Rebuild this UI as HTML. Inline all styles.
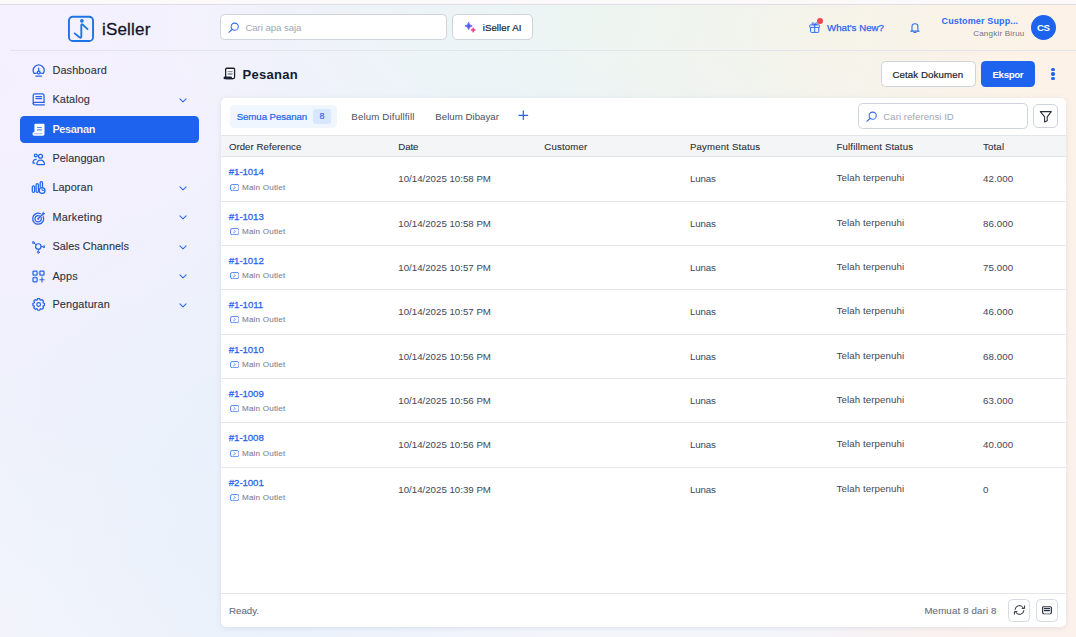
<!DOCTYPE html>
<html lang="id">
<head>
<meta charset="utf-8">
<title>Pesanan - iSeller</title>
<style>
*{box-sizing:border-box;margin:0;padding:0}
html,body{width:1076px;height:637px;overflow:hidden}
body{font-family:"Liberation Sans",sans-serif;color:#1f2937;position:relative;
 background:
  radial-gradient(ellipse 330px 300px at 1076px 40px, rgba(253,242,230,1) 0%, rgba(253,242,230,0) 100%),
  radial-gradient(ellipse 330px 230px at 830px 30px, rgba(243,244,233,1) 0%, rgba(243,244,233,0) 100%),
  radial-gradient(ellipse 440px 260px at 580px 10px, rgba(234,245,244,1) 0%, rgba(234,245,244,0) 100%),
  linear-gradient(270deg, rgba(252,241,235,1) 0px, rgba(252,241,235,0.9) 12px, rgba(252,241,235,0) 260px),
  radial-gradient(ellipse 300px 640px at 1076px 637px, rgba(252,239,237,1) 0%, rgba(252,239,237,0) 100%),
  radial-gradient(ellipse 300px 380px at 260px 540px, rgba(232,240,251,1) 0%, rgba(232,240,251,0) 100%),
  radial-gradient(ellipse 420px 420px at 0px 80px, rgba(245,240,254,1) 0%, rgba(245,240,254,0) 100%),
  linear-gradient(180deg,#f2f2fd 0%,#edf1fb 55%,#f4f5fb 100%);
}
.abs{position:absolute}
.t{position:absolute;white-space:nowrap;line-height:1}
#topstrip{left:0;top:0;width:1076px;height:4px;background:#fbf9f9}
#topline{left:0;top:4px;width:1076px;height:1px;background:#dfdde3}
#hline{left:10px;top:50px;width:1066px;height:1px;background:#e3e4ea}
.nav{color:#2b3240;-webkit-text-stroke:0.1px #2b3240}
.ic{position:absolute;left:32.4px;width:13px;height:13px;fill:none;stroke:#2563eb;stroke-width:1.25;stroke-linecap:round;stroke-linejoin:round}
.chev{position:absolute;left:179.3px;width:8px;height:5px;fill:none;stroke:#2f6bee;stroke-width:1.05;stroke-linecap:round;stroke-linejoin:round}
#active{left:20px;top:116px;width:179px;height:26.8px;border-radius:4.5px;background:#1d63ed}
.box{position:absolute;background:#fff;border:1px solid #cfd3dc;border-radius:4.5px}
.ph{color:#a2a8b4}
#card{left:221px;top:98px;width:845px;height:529px;background:#fff;border-radius:5px;box-shadow:0 1px 5px rgba(80,100,160,.13)}
#thead{left:221px;top:135px;width:845px;height:22px;background:#f4f5f7;border-top:1px solid #e3e5eb;border-bottom:1px solid #e3e5eb}
.th{color:#2a303b;-webkit-text-stroke:0.1px #2a303b}
.rl{position:absolute;left:221px;width:845px;height:1px;background:#e5e7ed}
.ref{color:#2865ee;-webkit-text-stroke:0.26px #2865ee}
.out{color:#7d8391;-webkit-text-stroke:0.1px #7d8391}
.c{color:#414755}
.tab{color:#4a505c}
.ft{color:#697080;-webkit-text-stroke:0.12px #697080}
</style>
</head>
<body>
<div id="topstrip" class="abs"></div>
<div id="topline" class="abs"></div>
<div id="hline" class="abs"></div>

<!-- logo -->
<svg class="abs" style="left:67px;top:15px" width="28" height="28" viewBox="0 0 28 28" fill="none">
 <rect x="1.95" y="1.75" width="24.1" height="24.3" rx="3.9" stroke="#1b74e8" stroke-width="1.9"/>
 <circle cx="14.9" cy="5.8" r="1.85" fill="#1b74e8"/>
 <path d="M7.7 18.4 L12.4 22.2 Q14.3 23.6 14.3 21.4 V10.6 Q14.3 8.4 16 9.9 L20.5 14.1" stroke="#1b74e8" stroke-width="1.85" stroke-linecap="round" stroke-linejoin="round"/>
</svg>
<span class="t" style="left:102px;top:20.9px;font-size:17px;color:#14142b;-webkit-text-stroke:0.3px #14142b;letter-spacing:0.18px">iSeller</span>

<!-- top search -->
<div class="box" style="left:220px;top:14.3px;width:226.5px;height:25.4px"></div>
<svg class="abs" style="left:228px;top:22px" width="12" height="11" viewBox="0 0 12 11" fill="none" stroke="#2f6bee" stroke-width="1.05" stroke-linecap="round"><circle cx="6.7" cy="4.7" r="3.6"/><path d="M4 7.5 L0.9 10.3"/></svg>
<span class="t ph" style="left:245.4px;top:22.8px;font-size:9.7px;letter-spacing:-0.08px">Cari apa saja</span>
<div class="box" style="left:452px;top:14.3px;width:81px;height:25.4px;border-radius:5px"></div>
<svg class="abs" style="left:464px;top:21px" width="13" height="13" viewBox="0 0 13 13"><defs><linearGradient id="g1" x1="0" y1="0" x2="1" y2="1"><stop offset="0" stop-color="#3f7bff"/><stop offset="1" stop-color="#7a3ff0"/></linearGradient></defs><path d="M4.6 1.2 Q5 4.5 8.2 4.9 Q5 5.3 4.6 8.6 Q4.2 5.3 1 4.9 Q4.2 4.5 4.6 1.2Z" fill="url(#g1)" stroke="url(#g1)" stroke-width="0.8" stroke-linejoin="round"/><path d="M9.2 6.6 Q9.5 8.7 11.6 9 Q9.5 9.3 9.2 11.4 Q8.9 9.3 6.8 9 Q8.9 8.7 9.2 6.6Z" fill="#e8468a" stroke="#e8468a" stroke-width="0.7" stroke-linejoin="round"/></svg>
<span class="t" style="left:482.7px;top:22.8px;font-size:9.7px;color:#20242f;-webkit-text-stroke:0.2px #20242f;letter-spacing:0.05px">iSeller AI</span>

<!-- top right -->
<svg class="abs" style="left:808.6px;top:22.4px" width="11.4" height="11" viewBox="0 0 11.4 11" fill="none" stroke="#2f6bee" stroke-width="1" stroke-linejoin="round"><rect x="0.7" y="2.9" width="10" height="2.5" rx="0.6"/><path d="M1.6 5.4 V9.6 a0.8 0.8 0 0 0 .8 .8 H9 a0.8 .8 0 0 0 .8 -.8 V5.4"/><path d="M5.7 2.9 V10.4"/><path d="M5.7 2.9 C3.6 2.9 2.7 2 3.2 1.1 C3.8 .2 5.3 .9 5.7 2.9 C6.1 .9 7.6 .2 8.2 1.1 C8.7 2 7.8 2.9 5.7 2.9Z"/></svg>
<div class="abs" style="left:816.7px;top:18.3px;width:6px;height:6px;border-radius:50%;background:#ee4552"></div>
<span class="t" style="left:827px;top:22.8px;font-size:9.7px;color:#2a63ea;-webkit-text-stroke:0.25px #2a63ea;letter-spacing:0.02px">What&#39;s New?</span>
<svg class="abs" style="left:909.6px;top:22px" width="10" height="11.4" viewBox="0 0 10 11.4" fill="none" stroke="#2f6bee" stroke-width="1.1" stroke-linejoin="round" stroke-linecap="round"><path d="M2 9 V4.3 a2.6 2.6 0 0 1 2.6 -2.6 H5.3 a2.6 2.6 0 0 1 2.6 2.6 V9"/><path d="M0.9 9.2 H9" stroke-width="1.2"/><path d="M3.9 10.5 H6" stroke-width="1.1"/></svg>
<span class="t" style="left:941.5px;top:17.2px;font-size:9px;font-weight:bold;color:#2d6bf0;letter-spacing:0.14px">Customer Supp...</span>
<span class="t" style="left:973.2px;top:30.1px;font-size:8px;color:#6f7582;letter-spacing:0.22px">Cangkir Biruu</span>
<div class="abs" style="left:1030.9px;top:15.1px;width:25px;height:25px;border-radius:50%;background:#1d63ed"></div>
<span class="t" style="left:1037px;top:23.2px;font-size:9.7px;font-weight:bold;color:#fff;letter-spacing:-0.38px">CS</span>

<!-- sidebar -->
<div id="active" class="abs"></div>
<!--ICONS-->
<svg class="ic" style="top:64.45px" viewBox="0 0 13 13"><path d="M5.3 9 Q3.5 9.6 2.15 9.3 A5.4 5.4 0 1 1 11.25 9.3 Q9.9 9.6 8.1 9"/><circle cx="6.7" cy="8.4" r="1.4"/><path d="M6.7 6.9 V4"/><path d="M3.9 12 H9.5"/></svg>
<svg class="ic" style="top:93.4px" viewBox="0 0 13 13"><path d="M12 9.3 V2.3 a1.5 1.5 0 0 0 -1.5 -1.5 H2.7 a1.5 1.5 0 0 0 -1.5 1.5 V10.4 a1.5 1.5 0 0 0 1.5 1.5 H12.3"/><path d="M1.2 10.7 a1.5 1.5 0 0 1 1.5 -1.4 H12.3" stroke-width="1.3"/><path d="M3.9 3.6 H9.6 M3.9 5.6 H9.6" stroke-width="1.15"/></svg>
<svg class="ic" style="top:123.25px;stroke:none" viewBox="0 0 13 13"><path d="M2.4 1.7 a0.9 0.9 0 0 1 .9 -.9 H11.6 a0.9 0.9 0 0 1 .9 .9 V9.8 H2.4Z" fill="#fff"/><rect x="0.5" y="8.9" width="12" height="3.8" rx="1.6" fill="#fff"/><path d="M5 4.5 H9.9 M5 6.9 H9.9" stroke="#5b8df5" stroke-width="1.1" stroke-linecap="butt"/><path d="M2.2 10.8 H10" stroke="#7fa6f7" stroke-width="0.8"/></svg>
<svg class="ic" style="top:152.8px" viewBox="0 0 13 13"><circle cx="3.8" cy="2.5" r="1.45"/><circle cx="8.5" cy="3.2" r="1.95"/><path d="M5.3 11.6 H12 a.5 .5 0 0 0 .5 -.6 C12.2 8.5 10.6 7 8.6 7 C6.6 7 5.1 8.5 4.8 11 a.5 .5 0 0 0 .5 .6Z"/><path d="M4.2 6.3 C2.4 6.1 1.1 7.6 0.9 9.5 c0 .4 .2 .7 .6 .7 H2.7"/></svg>
<svg class="ic" style="top:181.35px;overflow:visible" viewBox="0 0 13 13"><rect x="0.3" y="4.8" width="2.3" height="6.6" rx="1.15"/><rect x="4.1" y="2.6" width="2.3" height="8.8" rx="1.15"/><path d="M8.2 6 V1.75 a1.15 1.15 0 0 1 2.3 0 V5.6"/><circle cx="10.1" cy="9.4" r="2.9" fill="#f1f1fd"/><path d="M10.1 7.6 V9.4 H11.9" stroke-width="0.9"/></svg>
<svg class="ic" style="top:211.65px;overflow:visible" viewBox="0 0 13 13"><path d="M8.4 1.7 A5.5 5.5 0 1 0 11.3 4.7"/><path d="M7.7 3.95 A3.2 3.2 0 1 0 9.1 5.5"/><circle cx="6.2" cy="6.75" r="0.9" fill="#2f6bee" stroke="none"/><path d="M6.2 6.75 L10 2.9"/><path d="M10 2.9 L10.2 1.3 L11.5 0.2 L11.7 1.3 L12.9 1.6 L11.6 2.8Z" fill="#2f6bee" stroke-width="0.6"/></svg>
<svg class="ic" style="top:240.6px" viewBox="0 0 13 13"><circle cx="6.3" cy="5.5" r="2.75" stroke-width="1.2"/><circle cx="1.2" cy="1.5" r="1" stroke-width="0.95"/><circle cx="12" cy="5.7" r="1" stroke-width="0.95"/><circle cx="6.3" cy="11.3" r="1" stroke-width="0.95"/><path d="M2 2.1 L4.1 3.8 M9.1 5.6 H11 M6.3 8.3 V10.3" stroke-width="0.95"/></svg>
<svg class="ic" style="top:269.6px" viewBox="0 0 13 13"><rect x="1" y="1" width="4.1" height="4.1" rx="0.7"/><rect x="7.9" y="1" width="4.1" height="4.1" rx="0.7"/><rect x="1" y="7.7" width="4.1" height="4.1" rx="0.7"/><path d="M10 7.8 V11.9 M7.9 9.8 H12.1" stroke-width="1.1"/><path d="M5.1 3 H7.9 M3 5.1 V7.7 M10 5.1 V7.6" stroke="#7ea4f5" stroke-width="0.9"/></svg>
<svg class="ic" style="top:298.4px" viewBox="0 0 13 13"><path d="M5.25 1.91 L5.48 0.67 L7.82 0.67 L8.05 1.91 L8.87 2.25 L9.91 1.53 L11.57 3.19 L10.85 4.23 L11.19 5.05 L12.43 5.28 L12.43 7.62 L11.19 7.85 L10.85 8.67 L11.57 9.71 L9.91 11.37 L8.87 10.65 L8.05 10.99 L7.82 12.23 L5.48 12.23 L5.25 10.99 L4.43 10.65 L3.39 11.37 L1.73 9.71 L2.45 8.67 L2.11 7.85 L0.87 7.62 L0.87 5.28 L2.11 5.05 L2.45 4.23 L1.73 3.19 L3.39 1.53 L4.43 2.25Z" stroke-width="1.2"/><circle cx="6.65" cy="6.45" r="1.9" stroke-width="1.15"/></svg>
<!--/ICONS-->
<span class="t nav" style="left:52.4px;top:64.5px;font-size:10.9px;letter-spacing:0.14px">Dashboard</span>
<span class="t nav" style="left:52.4px;top:93.8px;font-size:10.9px;letter-spacing:0.09px">Katalog</span>
<span class="t nav" style="left:52.4px;top:123.7px;font-size:10.9px;color:#fff;font-weight:bold;letter-spacing:-0.31px">Pesanan</span>
<span class="t nav" style="left:52.4px;top:152.9px;font-size:10.9px;letter-spacing:0.03px">Pelanggan</span>
<span class="t nav" style="left:52.4px;top:181.5px;font-size:10.9px;letter-spacing:0.06px">Laporan</span>
<span class="t nav" style="left:52.4px;top:211.7px;font-size:10.9px;letter-spacing:0.22px">Marketing</span>
<span class="t nav" style="left:52.4px;top:241px;font-size:10.9px;letter-spacing:0.02px">Sales Channels</span>
<span class="t nav" style="left:52.4px;top:270.6px;font-size:10.9px;letter-spacing:0.14px">Apps</span>
<span class="t nav" style="left:52.4px;top:298.5px;font-size:10.9px;letter-spacing:0.12px">Pengaturan</span>
<svg class="chev" style="top:97.5px" viewBox="0 0 8 5"><path d="M0.9 0.8 L4 3.9 L7.1 0.8"/></svg>
<svg class="chev" style="top:185.7px" viewBox="0 0 8 5"><path d="M0.9 0.8 L4 3.9 L7.1 0.8"/></svg>
<svg class="chev" style="top:214.6px" viewBox="0 0 8 5"><path d="M0.9 0.8 L4 3.9 L7.1 0.8"/></svg>
<svg class="chev" style="top:244.6px" viewBox="0 0 8 5"><path d="M0.9 0.8 L4 3.9 L7.1 0.8"/></svg>
<svg class="chev" style="top:274px" viewBox="0 0 8 5"><path d="M0.9 0.8 L4 3.9 L7.1 0.8"/></svg>
<svg class="chev" style="top:303.1px" viewBox="0 0 8 5"><path d="M0.9 0.8 L4 3.9 L7.1 0.8"/></svg>

<!-- page title -->
<svg class="abs" style="left:222.6px;top:67.4px" width="13" height="13" viewBox="0 0 13 13"><path d="M2.65 10 V2.3 a1.05 1.05 0 0 1 1.05 -1.05 H10.5 a1.05 1.05 0 0 1 1.05 1.05 V10.2 a1.45 1.45 0 0 1 -1.45 1.45 H3" fill="#fff" stroke="#1a2232" stroke-width="1.3" stroke-linejoin="round"/><path d="M1.9 9.6 H8.3 L9.4 10.9 Q10.2 11.6 10.1 12.3 H1.9 a1.35 1.35 0 0 1 0 -2.7Z" fill="#1a2232"/><path d="M4.7 4.6 H9.6" stroke="#8d93a0" stroke-width="1.25"/><path d="M4.7 7 H9.6" stroke="#3a4150" stroke-width="1"/></svg>
<span class="t" style="left:242.6px;top:67.7px;font-size:13px;font-weight:bold;color:#131a33;letter-spacing:0.29px">Pesanan</span>
<div class="box" style="left:881px;top:61px;width:94.8px;height:26px;border-radius:4.5px"></div>
<span class="t" style="left:892.5px;top:69.9px;font-size:9.7px;color:#20242f;-webkit-text-stroke:0.2px #20242f;letter-spacing:0.09px">Cetak Dokumen</span>
<div class="abs" style="left:981px;top:61px;width:54px;height:26px;border-radius:4.5px;background:#1d63ed"></div>
<span class="t" style="left:992.5px;top:69.9px;font-size:9.7px;color:#fff;font-weight:bold;letter-spacing:-0.34px">Ekspor</span>
<div class="abs" style="left:1051.3px;top:67.7px;width:3.4px;height:3.4px;border-radius:50%;background:#2563eb"></div>
<div class="abs" style="left:1051.3px;top:72.2px;width:3.4px;height:3.4px;border-radius:50%;background:#2563eb"></div>
<div class="abs" style="left:1051.3px;top:76.8px;width:3.4px;height:3.4px;border-radius:50%;background:#2563eb"></div>

<!-- card -->
<div id="card" class="abs"></div>
<div class="abs" style="left:230px;top:104.8px;width:107px;height:23px;border-radius:4.5px;background:#eff6ff"></div>
<span class="t" style="left:236.7px;top:111.8px;font-size:9.7px;color:#2563eb;-webkit-text-stroke:0.2px #2563eb;letter-spacing:-0.09px">Semua Pesanan</span>
<div class="abs" style="left:313.1px;top:109.1px;width:17.7px;height:14.8px;border-radius:3px;background:#d7e7fe"></div>
<span class="t" style="left:319.6px;top:111.7px;font-size:8.8px;color:#2563eb;-webkit-text-stroke:0.15px #2563eb">8</span>
<span class="t tab" style="left:351.3px;top:111.8px;font-size:9.7px;letter-spacing:0.15px">Belum Difullfill</span>
<span class="t tab" style="left:435.3px;top:111.8px;font-size:9.7px;letter-spacing:0.01px">Belum Dibayar</span>
<svg class="abs" style="left:518px;top:109.5px" width="10.6" height="10.6" viewBox="0 0 10.6 10.6" stroke="#2563eb" stroke-width="1.2" stroke-linecap="round"><path d="M5.3 0.9 V9.7 M0.9 5.3 H9.7"/></svg>

<div class="box" style="left:858.2px;top:103.4px;width:169.6px;height:25.4px"></div>
<svg class="abs" style="left:866.2px;top:111.2px" width="12" height="11" viewBox="0 0 12 11" fill="none" stroke="#2f6bee" stroke-width="1.05" stroke-linecap="round"><circle cx="6.7" cy="4.7" r="3.6"/><path d="M4 7.5 L0.9 10.3"/></svg>
<span class="t ph" style="left:883.3px;top:111.8px;font-size:9.7px;letter-spacing:0.00px">Cari referensi ID</span>
<div class="box" style="left:1033.2px;top:104.3px;width:24.4px;height:24.2px;border-radius:5px"></div>
<svg class="abs" style="left:1038.6px;top:109.6px" width="14" height="14" viewBox="0 0 14 14" fill="none" stroke="#252b38" stroke-width="1.05" stroke-linejoin="round"><path d="M1.3 1.6 H12.3 L8.2 6.9 V10.8 L5.6 12 V6.9Z"/></svg>

<div id="thead" class="abs"></div>
<span class="t th" style="left:228.9px;top:141.8px;font-size:9.6px;letter-spacing:0.07px">Order Reference</span>
<span class="t th" style="left:398.3px;top:141.8px;font-size:9.6px;letter-spacing:-0.04px">Date</span>
<span class="t th" style="left:544.3px;top:141.8px;font-size:9.6px;letter-spacing:0.20px">Customer</span>
<span class="t th" style="left:690px;top:141.8px;font-size:9.6px;letter-spacing:0.18px">Payment Status</span>
<span class="t th" style="left:836.5px;top:141.8px;font-size:9.6px;letter-spacing:0.17px">Fulfillment Status</span>
<span class="t th" style="left:983px;top:141.8px;font-size:9.6px;letter-spacing:0.19px">Total</span>

<span class="t ref" style="left:228.8px;top:166.70px;font-size:9.7px;letter-spacing:-0.09px">#1-1014</span>
<svg class="abs" style="left:229.7px;top:183.8px" width="9.4" height="7.2" viewBox="0 0 9.4 7.2" fill="none" stroke="#4a82f3" stroke-width="0.95"><rect x="0.5" y="0.5" width="8.3" height="6.2" rx="1.7"/><path d="M8.6 1.8 V5.4" stroke="#a9c5fa" stroke-width="1.1"/><path d="M4 2.4 L5.5 3.6 L3.4 4.9" stroke="#6f9bf6" stroke-width="0.9" stroke-linecap="round" stroke-linejoin="round"/></svg>
<span class="t out" style="left:242.0px;top:183.50px;font-size:8.1px;letter-spacing:0.19px">Main Outlet</span>
<span class="t c" style="left:398.3px;top:173.70px;font-size:9.7px;letter-spacing:-0.00px">10/14/2025 10:58 PM</span>
<span class="t c" style="left:690.0px;top:173.70px;font-size:9.7px;letter-spacing:-0.14px">Lunas</span>
<span class="t c" style="left:836.5px;top:172.70px;font-size:9.7px;letter-spacing:0.10px">Telah terpenuhi</span>
<span class="t c" style="left:983.0px;top:173.70px;font-size:9.7px;letter-spacing:0.11px">42.000</span>
<div class="rl" style="top:201px"></div>
<span class="t ref" style="left:228.8px;top:211.70px;font-size:9.7px;letter-spacing:-0.09px">#1-1013</span>
<svg class="abs" style="left:229.7px;top:227.8px" width="9.4" height="7.2" viewBox="0 0 9.4 7.2" fill="none" stroke="#4a82f3" stroke-width="0.95"><rect x="0.5" y="0.5" width="8.3" height="6.2" rx="1.7"/><path d="M8.6 1.8 V5.4" stroke="#a9c5fa" stroke-width="1.1"/><path d="M4 2.4 L5.5 3.6 L3.4 4.9" stroke="#6f9bf6" stroke-width="0.9" stroke-linecap="round" stroke-linejoin="round"/></svg>
<span class="t out" style="left:242.0px;top:227.50px;font-size:8.1px;letter-spacing:0.19px">Main Outlet</span>
<span class="t c" style="left:398.3px;top:218.70px;font-size:9.7px;letter-spacing:-0.00px">10/14/2025 10:58 PM</span>
<span class="t c" style="left:690.0px;top:218.70px;font-size:9.7px;letter-spacing:-0.14px">Lunas</span>
<span class="t c" style="left:836.5px;top:217.70px;font-size:9.7px;letter-spacing:0.10px">Telah terpenuhi</span>
<span class="t c" style="left:983.0px;top:218.70px;font-size:9.7px;letter-spacing:0.11px">86.000</span>
<div class="rl" style="top:245px"></div>
<span class="t ref" style="left:228.8px;top:255.70px;font-size:9.7px;letter-spacing:-0.09px">#1-1012</span>
<svg class="abs" style="left:229.7px;top:271.8px" width="9.4" height="7.2" viewBox="0 0 9.4 7.2" fill="none" stroke="#4a82f3" stroke-width="0.95"><rect x="0.5" y="0.5" width="8.3" height="6.2" rx="1.7"/><path d="M8.6 1.8 V5.4" stroke="#a9c5fa" stroke-width="1.1"/><path d="M4 2.4 L5.5 3.6 L3.4 4.9" stroke="#6f9bf6" stroke-width="0.9" stroke-linecap="round" stroke-linejoin="round"/></svg>
<span class="t out" style="left:242.0px;top:271.50px;font-size:8.1px;letter-spacing:0.19px">Main Outlet</span>
<span class="t c" style="left:398.3px;top:262.70px;font-size:9.7px;letter-spacing:-0.00px">10/14/2025 10:57 PM</span>
<span class="t c" style="left:690.0px;top:262.70px;font-size:9.7px;letter-spacing:-0.14px">Lunas</span>
<span class="t c" style="left:836.5px;top:261.70px;font-size:9.7px;letter-spacing:0.10px">Telah terpenuhi</span>
<span class="t c" style="left:983.0px;top:262.70px;font-size:9.7px;letter-spacing:0.11px">75.000</span>
<div class="rl" style="top:289px"></div>
<span class="t ref" style="left:228.8px;top:299.70px;font-size:9.7px;letter-spacing:-0.07px">#1-1011</span>
<svg class="abs" style="left:229.7px;top:315.8px" width="9.4" height="7.2" viewBox="0 0 9.4 7.2" fill="none" stroke="#4a82f3" stroke-width="0.95"><rect x="0.5" y="0.5" width="8.3" height="6.2" rx="1.7"/><path d="M8.6 1.8 V5.4" stroke="#a9c5fa" stroke-width="1.1"/><path d="M4 2.4 L5.5 3.6 L3.4 4.9" stroke="#6f9bf6" stroke-width="0.9" stroke-linecap="round" stroke-linejoin="round"/></svg>
<span class="t out" style="left:242.0px;top:315.50px;font-size:8.1px;letter-spacing:0.19px">Main Outlet</span>
<span class="t c" style="left:398.3px;top:306.70px;font-size:9.7px;letter-spacing:-0.00px">10/14/2025 10:57 PM</span>
<span class="t c" style="left:690.0px;top:306.70px;font-size:9.7px;letter-spacing:-0.14px">Lunas</span>
<span class="t c" style="left:836.5px;top:305.70px;font-size:9.7px;letter-spacing:0.10px">Telah terpenuhi</span>
<span class="t c" style="left:983.0px;top:306.70px;font-size:9.7px;letter-spacing:0.11px">46.000</span>
<div class="rl" style="top:334px"></div>
<span class="t ref" style="left:228.8px;top:344.70px;font-size:9.7px;letter-spacing:-0.09px">#1-1010</span>
<svg class="abs" style="left:229.7px;top:360.8px" width="9.4" height="7.2" viewBox="0 0 9.4 7.2" fill="none" stroke="#4a82f3" stroke-width="0.95"><rect x="0.5" y="0.5" width="8.3" height="6.2" rx="1.7"/><path d="M8.6 1.8 V5.4" stroke="#a9c5fa" stroke-width="1.1"/><path d="M4 2.4 L5.5 3.6 L3.4 4.9" stroke="#6f9bf6" stroke-width="0.9" stroke-linecap="round" stroke-linejoin="round"/></svg>
<span class="t out" style="left:242.0px;top:360.50px;font-size:8.1px;letter-spacing:0.19px">Main Outlet</span>
<span class="t c" style="left:398.3px;top:351.70px;font-size:9.7px;letter-spacing:-0.00px">10/14/2025 10:56 PM</span>
<span class="t c" style="left:690.0px;top:351.70px;font-size:9.7px;letter-spacing:-0.14px">Lunas</span>
<span class="t c" style="left:836.5px;top:350.70px;font-size:9.7px;letter-spacing:0.10px">Telah terpenuhi</span>
<span class="t c" style="left:983.0px;top:351.70px;font-size:9.7px;letter-spacing:0.11px">68.000</span>
<div class="rl" style="top:378px"></div>
<span class="t ref" style="left:228.8px;top:388.70px;font-size:9.7px;letter-spacing:-0.09px">#1-1009</span>
<svg class="abs" style="left:229.7px;top:404.8px" width="9.4" height="7.2" viewBox="0 0 9.4 7.2" fill="none" stroke="#4a82f3" stroke-width="0.95"><rect x="0.5" y="0.5" width="8.3" height="6.2" rx="1.7"/><path d="M8.6 1.8 V5.4" stroke="#a9c5fa" stroke-width="1.1"/><path d="M4 2.4 L5.5 3.6 L3.4 4.9" stroke="#6f9bf6" stroke-width="0.9" stroke-linecap="round" stroke-linejoin="round"/></svg>
<span class="t out" style="left:242.0px;top:404.50px;font-size:8.1px;letter-spacing:0.19px">Main Outlet</span>
<span class="t c" style="left:398.3px;top:395.70px;font-size:9.7px;letter-spacing:-0.00px">10/14/2025 10:56 PM</span>
<span class="t c" style="left:690.0px;top:395.70px;font-size:9.7px;letter-spacing:-0.14px">Lunas</span>
<span class="t c" style="left:836.5px;top:394.70px;font-size:9.7px;letter-spacing:0.10px">Telah terpenuhi</span>
<span class="t c" style="left:983.0px;top:395.70px;font-size:9.7px;letter-spacing:0.11px">63.000</span>
<div class="rl" style="top:422px"></div>
<span class="t ref" style="left:228.8px;top:432.70px;font-size:9.7px;letter-spacing:-0.09px">#1-1008</span>
<svg class="abs" style="left:229.7px;top:449.8px" width="9.4" height="7.2" viewBox="0 0 9.4 7.2" fill="none" stroke="#4a82f3" stroke-width="0.95"><rect x="0.5" y="0.5" width="8.3" height="6.2" rx="1.7"/><path d="M8.6 1.8 V5.4" stroke="#a9c5fa" stroke-width="1.1"/><path d="M4 2.4 L5.5 3.6 L3.4 4.9" stroke="#6f9bf6" stroke-width="0.9" stroke-linecap="round" stroke-linejoin="round"/></svg>
<span class="t out" style="left:242.0px;top:449.50px;font-size:8.1px;letter-spacing:0.19px">Main Outlet</span>
<span class="t c" style="left:398.3px;top:439.70px;font-size:9.7px;letter-spacing:-0.00px">10/14/2025 10:56 PM</span>
<span class="t c" style="left:690.0px;top:439.70px;font-size:9.7px;letter-spacing:-0.14px">Lunas</span>
<span class="t c" style="left:836.5px;top:438.70px;font-size:9.7px;letter-spacing:0.10px">Telah terpenuhi</span>
<span class="t c" style="left:983.0px;top:439.70px;font-size:9.7px;letter-spacing:0.11px">40.000</span>
<div class="rl" style="top:467px"></div>
<span class="t ref" style="left:228.8px;top:477.70px;font-size:9.7px;letter-spacing:-0.09px">#2-1001</span>
<svg class="abs" style="left:229.7px;top:493.8px" width="9.4" height="7.2" viewBox="0 0 9.4 7.2" fill="none" stroke="#4a82f3" stroke-width="0.95"><rect x="0.5" y="0.5" width="8.3" height="6.2" rx="1.7"/><path d="M8.6 1.8 V5.4" stroke="#a9c5fa" stroke-width="1.1"/><path d="M4 2.4 L5.5 3.6 L3.4 4.9" stroke="#6f9bf6" stroke-width="0.9" stroke-linecap="round" stroke-linejoin="round"/></svg>
<span class="t out" style="left:242.0px;top:493.50px;font-size:8.1px;letter-spacing:0.19px">Main Outlet</span>
<span class="t c" style="left:398.3px;top:484.70px;font-size:9.7px;letter-spacing:-0.00px">10/14/2025 10:39 PM</span>
<span class="t c" style="left:690.0px;top:484.70px;font-size:9.7px;letter-spacing:-0.14px">Lunas</span>
<span class="t c" style="left:836.5px;top:483.70px;font-size:9.7px;letter-spacing:0.10px">Telah terpenuhi</span>
<span class="t c" style="left:983.0px;top:484.70px;font-size:9.7px">0</span>
<div class="rl" style="top:593px"></div>
<span class="t ft" style="left:229px;top:605.9px;font-size:9.7px">Ready.</span>
<span class="t ft" style="left:924.4px;top:605.9px;font-size:9.7px;letter-spacing:0.15px">Memuat 8 dari 8</span>
<div class="box" style="left:1008.2px;top:599px;width:21.7px;height:22.6px;border-color:#d5dae3"></div>
<svg class="abs" style="left:1012.6px;top:604.3px" width="13" height="12" viewBox="0 0 13 12" fill="none" stroke="#2a3342" stroke-width="1" stroke-linecap="round" stroke-linejoin="round"><path d="M2.1 5.4 A4.4 4.3 0 0 1 10.5 4.1"/><path d="M11.6 1.9 V4.4 H9.1"/><path d="M10.9 6.6 A4.4 4.3 0 0 1 2.5 7.9"/><path d="M1.4 10.1 V7.6 H3.9"/></svg>
<div class="box" style="left:1036.2px;top:599px;width:21.7px;height:22.6px;border-color:#d5dae3"></div>
<svg class="abs" style="left:1041px;top:605px" width="12" height="11" viewBox="0 0 12 11" fill="none" stroke="#2a3342" stroke-width="1.15" stroke-linecap="round" stroke-linejoin="round"><path d="M2.6 8.6 a1 1 0 0 1 -1 -1 V2.7 a1 1 0 0 1 1 -1 H9.4 a1 1 0 0 1 1 1 V7.6 a1 1 0 0 1 -1 1"/><path d="M3.3 3.6 H8.7 M3.3 5.6 H8.7" stroke-width="1.05"/><path d="M2.6 8.6 L3.9 9.2 L5 8.6 L6 9.2 L7 8.6 L8.1 9.2 L9.4 8.6" stroke-width="0.7"/></svg>
</body>
</html>
